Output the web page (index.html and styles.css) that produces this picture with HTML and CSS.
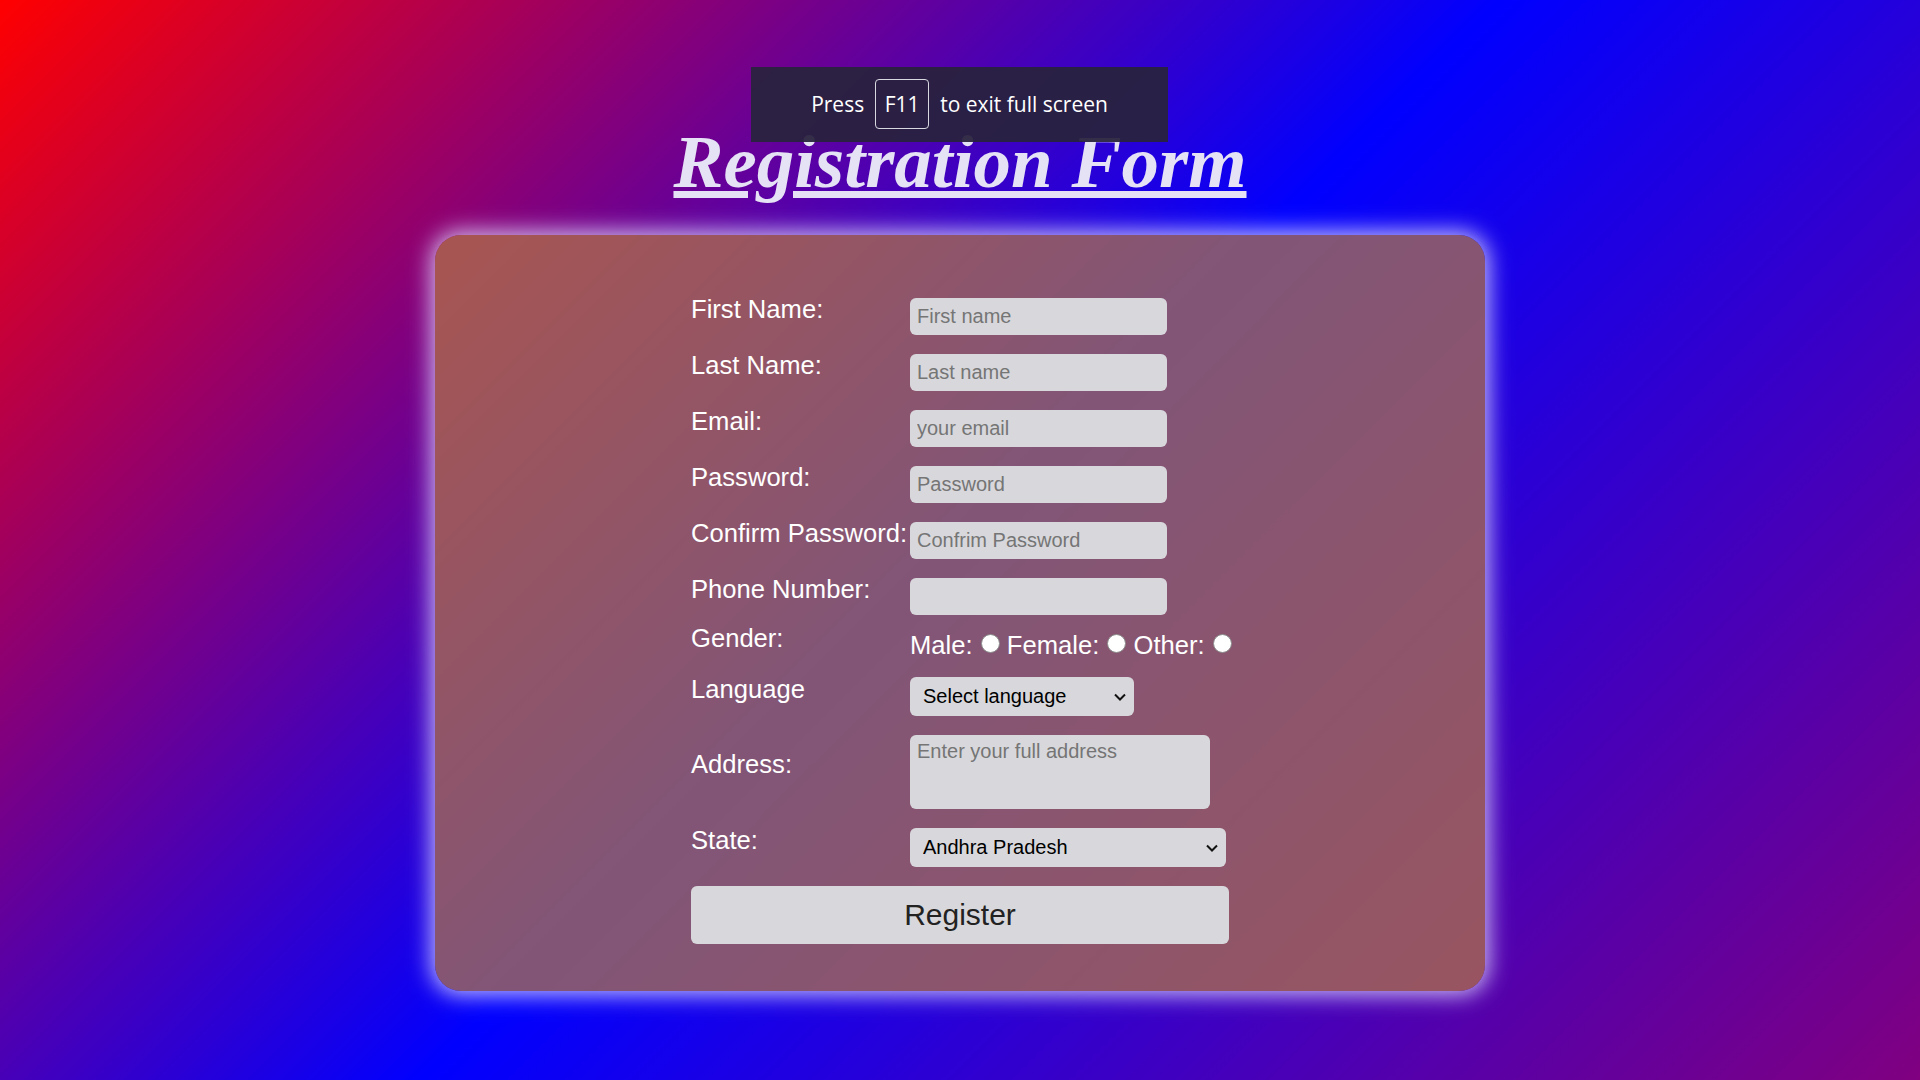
FILE: index.html
```html
<!DOCTYPE html>
<html lang="en">
<head>
<meta charset="utf-8">
<title>Registration Form</title>
<link rel="stylesheet" href="styles.css">
</head>
<body>
<div class="toast">Press <span class="key">F11</span> to exit full screen</div>
<h1 class="title">Registration Form</h1>
<div class="card">
  <form class="form">
    <label class="lbl">First Name:</label>
    <div class="ctl"><input class="field" type="text" placeholder="First name"></div>
    <label class="lbl">Last Name:</label>
    <div class="ctl"><input class="field" type="text" placeholder="Last name"></div>
    <label class="lbl">Email:</label>
    <div class="ctl"><input class="field" type="email" placeholder="your email"></div>
    <label class="lbl">Password:</label>
    <div class="ctl"><input class="field" type="password" placeholder="Password"></div>
    <label class="lbl">Confirm Password:</label>
    <div class="ctl"><input class="field" type="password" placeholder="Confrim Password"></div>
    <label class="lbl">Phone Number:</label>
    <div class="ctl"><input class="field" type="tel"></div>
    <label class="lbl">Gender:</label>
    <div class="ctl gender">Male: <input class="radio" type="radio" name="g"> Female: <input class="radio" type="radio" name="g"> Other: <input class="radio" type="radio" name="g"></div>
    <label class="lbl">Language</label>
    <div class="ctl"><select class="sel sel-lang"><option>Select language</option></select></div>
    <label class="lbl">Address:</label>
    <div class="ctl"><textarea class="area" placeholder="Enter your full address"></textarea></div>
    <label class="lbl">State:</label>
    <div class="ctl"><select class="sel sel-state"><option>Andhra Pradesh</option></select></div>
    <div class="ctl btn-row"><button class="btn" type="button">Register</button></div>
  </form>
</div>
</body>
</html>
```
FILE: styles.css
```css
html, body {
  margin: 0;
  padding: 0;
}
body {
  width: 1920px;
  height: 1080px;
  overflow: hidden;
  background: linear-gradient(135deg, #ff0000, #0000ff, #800080);
  font-family: "Liberation Sans", Arial, sans-serif;
  position: relative;
  display: flex;
  flex-direction: column;
  align-items: center;
}
.toast {
  position: absolute;
  left: 751px;
  top: 67px;
  width: 417px;
  height: 75px;
  box-sizing: border-box;
  background: rgba(40, 34, 62, 0.94);
  color: #ffffff;
  font-family: "Open Sans", "Noto Sans", sans-serif;
  font-size: 21px;
  display: flex;
  align-items: center;
  justify-content: center;
  gap: 11px;
  padding-bottom: 2px;
  z-index: 5;
}
.key {
  display: inline-flex;
  align-items: center;
  justify-content: center;
  width: 54px;
  height: 50px;
  box-sizing: border-box;
  border: 1.5px solid #d8d8e0;
  border-radius: 4px;
}
.title {
  margin: 119px 0 0;
  font-family: "Liberation Serif", "Times New Roman", serif;
  font-size: 75px;
  font-weight: bold;
  font-style: italic;
  text-decoration: underline;
  color: #e6e2f6;
  line-height: 86px;
  height: 86px;
}
.card {
  margin-top: 30px;
  width: 1050px;
  height: 756px;
  box-sizing: border-box;
  border-radius: 26px;
  background: rgba(178, 116, 68, 0.73);
  box-shadow: 0 0 22px 4px rgba(225, 220, 255, 0.85);
  padding-top: 53px;
  display: flex;
  justify-content: center;
  align-items: flex-start;
}
.form {
  display: grid;
  grid-template-columns: 219px 319px;
  align-items: center;
}
.lbl {
  color: #ffffff;
  font-size: 25.6px;
  margin-bottom: 14px;
  white-space: nowrap;
}
.ctl {
  margin: 9.5px 0;
}
.field {
  display: block;
  width: 257px;
  height: 37px;
  box-sizing: border-box;
  border: none;
  border-radius: 6px;
  background: #d8d8dc;
  padding: 0 7px;
  font-family: "Liberation Sans", Arial, sans-serif;
  font-size: 20px;
  color: #222;
}
.field::placeholder, .area::placeholder {
  color: #757575;
}
.gender {
  margin: 6px 0 5.5px;
  color: #ffffff;
  font-size: 25.6px;
  white-space: nowrap;
}
.radio {
  appearance: none;
  -webkit-appearance: none;
  width: 19px;
  height: 19px;
  border-radius: 50%;
  background: #ffffff;
  border: 1px solid #8a8a8a;
  box-sizing: border-box;
  margin: 0 0 0 1px;
  vertical-align: 1px;
}
.sel {
  display: block;
  height: 39px;
  box-sizing: border-box;
  border: none;
  border-radius: 6px;
  background-color: #d8d8dc;
  font-family: "Liberation Sans", Arial, sans-serif;
  font-size: 20px;
  color: #000;
  padding: 0 13px;
  appearance: none;
  -webkit-appearance: none;
  background-image: url("data:image/svg+xml;utf8,<svg xmlns='http://www.w3.org/2000/svg' width='12' height='8' viewBox='0 0 12 8'><path d='M1 1.5 L6 6.5 L11 1.5' fill='none' stroke='%23111' stroke-width='2'/></svg>");
  background-repeat: no-repeat;
  background-size: 12px 8px;
}
.sel-lang {
  width: 224px;
  background-position: 204px 16px;
}
.sel-state {
  width: 316px;
  background-position: 296px 16px;
}
.area {
  display: block;
  width: 300px;
  height: 74px;
  box-sizing: border-box;
  border: none;
  border-radius: 6px;
  background: #d8d8dc;
  padding: 5px 7px;
  font-family: "Liberation Sans", Arial, sans-serif;
  font-size: 20px;
  resize: none;
}
.btn-row {
  grid-column: 1 / span 2;
}
.btn {
  display: block;
  width: 100%;
  height: 58px;
  border: none;
  border-radius: 6px;
  background: #d8d8dc;
  font-family: "Liberation Sans", Arial, sans-serif;
  font-size: 30px;
  color: #222;
  padding: 0;
}
```
